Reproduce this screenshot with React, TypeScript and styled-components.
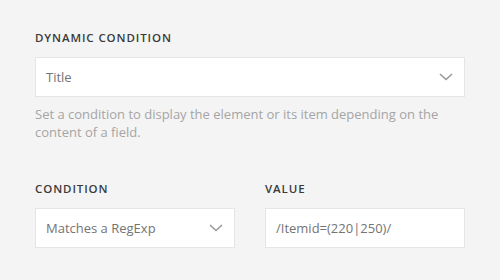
import styled, { createGlobalStyle } from "styled-components";

const GlobalStyle = createGlobalStyle`
  html, body {
    margin: 0;
    padding: 0;
    background: #f4f4f4;
  }
  body {
    font-family: "Open Sans", "Liberation Sans", sans-serif;
  }
`;

const Panel = styled.div`
  width: 500px;
  height: 280px;
  box-sizing: border-box;
  padding: 31px 35px 0;
  display: flex;
  flex-direction: column;
`;

const Field = styled.div<{ $grow?: boolean }>`
  display: flex;
  flex-direction: column;
  flex: ${({ $grow }) => ($grow ? "1 1 0" : "none")};
  min-width: 0;
`;

const Label = styled.div`
  font-family: "Open Sans", "Liberation Sans", sans-serif;
  font-size: 11.5px;
  font-weight: 600;
  letter-spacing: 0.9px;
  line-height: 14px;
  color: #3a3a3a;
  text-transform: uppercase;
  margin-bottom: 12px;
`;

const Box = styled.div`
  height: 40px;
  box-sizing: border-box;
  background: #fff;
  border: 1px solid #e5e5e5;
  display: flex;
  align-items: center;
  justify-content: space-between;
  padding: 0 11px 0 10px;
  font-size: 13px;
  color: #747474;
`;

const Chevron = () => (
  <svg width="14" height="8" viewBox="0 0 14 8">
    <polyline points="1,1 7,6.5 13,1" fill="none" stroke="#999" strokeWidth="1.6" />
  </svg>
);

const Help = styled.p`
  margin: 8px 0 0;
  font-size: 13px;
  line-height: 18px;
  color: #a5a5a5;
`;

const Row = styled.div`
  display: flex;
  gap: 30px;
  margin-top: 41px;
`;

export default function App() {
  return (
    <>
      <GlobalStyle />
      <Panel>
        <Field>
          <Label>Dynamic Condition</Label>
          <Box>
            <span>Title</span>
            <Chevron />
          </Box>
          <Help>
            Set a condition to display the element or its item depending on the content of a field.
          </Help>
        </Field>
        <Row>
          <Field $grow>
            <Label>Condition</Label>
            <Box>
              <span>Matches a RegExp</span>
              <Chevron />
            </Box>
          </Field>
          <Field $grow>
            <Label>Value</Label>
            <Box>
              <span>/Itemid=(220|250)/</span>
            </Box>
          </Field>
        </Row>
      </Panel>
    </>
  );
}
